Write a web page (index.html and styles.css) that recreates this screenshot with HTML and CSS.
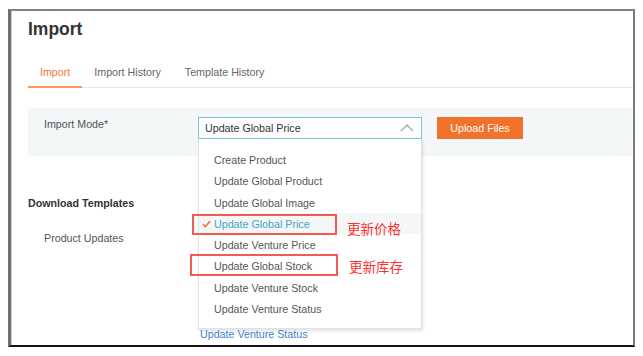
FILE: index.html
```html
<!DOCTYPE html>
<html lang="en">
<head>
    <meta charset="UTF-8">
    <title>Import</title>
    <link rel="stylesheet" href="styles.css">
</head>
<body>
    <div class="frame">
        <h1 class="page-title">Import</h1>

        <ul class="tabs">
            <li class="active">Import</li>
            <li>Import History</li>
            <li>Template History</li>
        </ul>

        <!-- import mode -->
        <div class="mode-panel">
            <label class="mode-label">Import Mode*</label>
            <div class="select-wrap">
                <div class="select">
                    <span>Update Global Price</span>
                    <svg class="chevron" width="14" height="8" viewBox="0 0 14 8">
                        <polyline points="1,7 7,1 13,7" fill="none" stroke="#a9a9a9" stroke-width="1.3"/>
                    </svg>
                </div>
                <ul class="dropdown">
                    <li>Create Product</li>
                    <li>Update Global Product</li>
                    <li>Update Global Image</li>
                    <li class="selected">
                        <svg class="check" width="9" height="8" viewBox="0 0 9 8">
                            <polyline points="1,4.2 3.4,6.6 8,1.2" fill="none" stroke="#f07128" stroke-width="1.6"/>
                        </svg>Update Global Price
                    </li>
                    <li>Update Venture Price</li>
                    <li>Update Global Stock</li>
                    <li>Update Venture Stock</li>
                    <li>Update Venture Status</li>
                </ul>
            </div>
            <button class="upload-btn" type="button">Upload Files</button>
        </div>

        <!-- templates -->
        <h3 class="section-title">Download Templates</h3>
        <div class="template-row">
            <span class="template-label">Product Updates</span>
            <div class="template-links">
                <a href="#">Update Venture Status</a>
            </div>
        </div>

        <!-- annotations -->
        <div class="mark mark-price"></div>
        <div class="mark mark-stock"></div>
        <span class="note note-price">更新价格</span>
        <span class="note note-stock">更新库存</span>
    </div>
</body>
</html>
```

FILE: styles.css
```css
body {
    margin: 0;
    background: #fff;
    font-family: "Liberation Sans", Arial, sans-serif;
    font-size: 10.7px;
    color: #555;
}

.frame {
    position: relative;
    box-sizing: border-box;
    width: 627px;
    height: 338px;
    margin: 9px 0 0 8px;
    border-top: 2px solid #858585;
    border-right: 2px solid #7c7c7c;
    border-bottom: 2px solid #151515;
    border-left: 3px solid #707070;
    box-shadow: inset 1px 0 0 #cfcfcf;
    overflow: hidden;
}

.page-title {
    margin: 8px 0 0 17px;
    font-size: 17.5px;
    line-height: 20px;
    font-weight: bold;
    color: #333;
}

.tabs {
    list-style: none;
    display: flex;
    margin: 17px 0 0 17px;
    padding: 0;
    border-bottom: 1px solid #e6e6e6;
}

.tabs li {
    padding: 9px 12px 7px;
    line-height: 14px;
    color: #666;
    border-bottom: 2px solid transparent;
    margin-bottom: -1px;
}

.tabs li.active {
    color: #f2773a;
    border-bottom-color: #f59a62;
}

.mode-panel {
    display: flex;
    align-items: flex-start;
    height: 48px;
    box-sizing: border-box;
    margin: 20px 0 0 17px;
    padding: 9px 0 0 16px;
    background: #f3f7f8;
}

.mode-label {
    width: 154px;
    line-height: 14px;
    color: #555;
}

.select-wrap {
    position: relative;
    width: 224px;
}

.select {
    display: flex;
    align-items: center;
    justify-content: space-between;
    box-sizing: border-box;
    height: 22px;
    padding: 0 7px 0 6px;
    background: #fff;
    border: 1px solid #7cc3d2;
    color: #333;
}

.chevron {
    margin-top: -1px;
}

.dropdown {
    position: absolute;
    top: 100%;
    left: 0;
    width: 224px;
    box-sizing: border-box;
    margin: 0;
    padding: 10px 0 9px;
    list-style: none;
    background: #fff;
    border: 1px solid #e2e2e2;
    border-top: none;
    box-shadow: 1px 2px 3px rgba(0, 0, 0, 0.12);
    z-index: 2;
}

.dropdown li {
    position: relative;
    height: 21.3px;
    line-height: 22.5px;
    padding-left: 15px;
    color: #555;
}

.dropdown li.selected {
    background: #f4f6f8;
    color: #3ea8c6;
}

.check {
    position: absolute;
    left: 3px;
    top: 7.5px;
}

.upload-btn {
    width: 86px;
    height: 22px;
    margin-left: 15px;
    padding: 0;
    border: none;
    background: #f2722b;
    color: #fff;
    font-family: "Liberation Sans", Arial, sans-serif;
    font-size: 10.7px;
}

.section-title {
    margin: 40px 0 0 17px;
    font-size: 10.7px;
    line-height: 14px;
    font-weight: bold;
    color: #333;
}

.template-row {
    display: flex;
    margin: 21px 0 0 33px;
}

.template-label {
    width: 156px;
    line-height: 14px;
}

.template-links {
    padding-top: 96px;
    line-height: 14px;
}

.template-links a {
    color: #3f7fd0;
    text-decoration: none;
}

.mark {
    position: absolute;
    box-sizing: border-box;
    border: 2px solid #f35a50;
    z-index: 3;
}

.mark-price {
    left: 181px;
    top: 203px;
    width: 145px;
    height: 21px;
}

.mark-stock {
    left: 179px;
    top: 243px;
    width: 148px;
    height: 22px;
}

.note {
    position: absolute;
    font-family: "Noto Sans CJK SC", sans-serif;
    font-size: 13.5px;
    line-height: 18px;
    color: #ff3030;
    z-index: 3;
}

.note-price {
    left: 336px;
    top: 208px;
}

.note-stock {
    left: 338px;
    top: 246px;
}
```
